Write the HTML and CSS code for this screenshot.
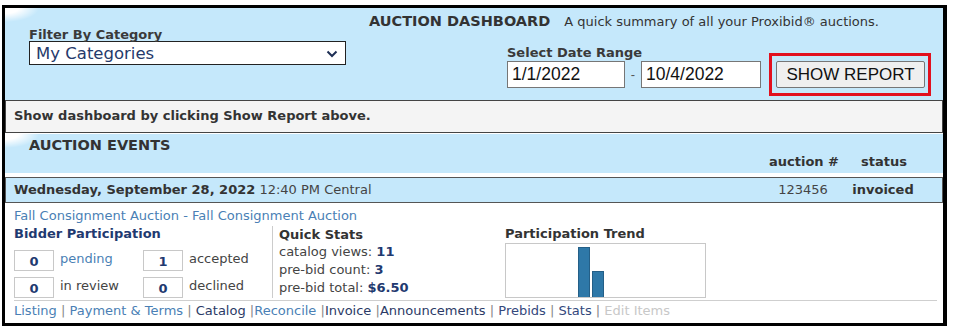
FILE: index.html
```html
<!DOCTYPE html>
<html>
<head>
<meta charset="utf-8">
<link rel="stylesheet" href="styles.css">
</head>
<body>
<div class="frame">
  <div class="header">
    <div class="filter">
      <div class="label">Filter By Category</div>
      <div class="select">
        <span>My Categories</span>
        <svg class="chev" width="12" height="8" viewBox="0 0 12 8"><path d="M1.5 1.5 L6 6 L10.5 1.5" fill="none" stroke="#1e2f55" stroke-width="2"/></svg>
      </div>
    </div>
    <div class="right">
      <div class="titlerow"><span class="title">AUCTION DASHBOARD</span><span class="subtitle">A quick summary of all your Proxibid® auctions.</span></div>
      <div class="daterange">
        <div class="datecol">
          <div class="label">Select Date Range</div>
          <div class="inputs">
            <div class="date">1/1/2022</div>
            <span class="dash">-</span>
            <div class="date">10/4/2022</div>
          </div>
        </div>
        <div class="highlight"><div class="btn">SHOW REPORT</div></div>
      </div>
    </div>
  </div>
  <div class="notice">Show dashboard by clicking Show Report above.</div>
  <div class="events">
    <div class="events-title">AUCTION EVENTS</div>
    <div class="cols">
      <span></span><span class="colh">auction #</span><span class="colh">status</span>
    </div>
  </div>
  <div class="eventrow cols">
    <span><b>Wednesday, September 28, 2022</b> 12:40 PM Central</span>
    <span class="num">123456</span>
    <span class="stat">invoiced</span>
  </div>
  <div class="detail">
    <div class="auction-link">Fall Consignment Auction - Fall Consignment Auction</div>
    <div class="panels">
      <div class="bidders">
        <div class="ptitle navy">Bidder Participation</div>
        <div class="boxes">
          <div class="box">0</div><div class="blabel light">pending</div>
          <div class="box">1</div><div class="blabel">accepted</div>
          <div class="box">0</div><div class="blabel">in review</div>
          <div class="box">0</div><div class="blabel">declined</div>
        </div>
      </div>
      <div class="stats">
        <div class="ptitle">Quick Stats</div>
        <div class="sline">catalog views: <b>11</b></div>
        <div class="sline">pre-bid count: <b>3</b></div>
        <div class="sline">pre-bid total: <b>$6.50</b></div>
      </div>
      <div class="trend">
        <div class="ptitle">Participation Trend</div>
        <div class="chart">
          <div class="bar" style="height:50px"></div>
          <div class="bar" style="height:26px"></div>
        </div>
      </div>
    </div>
    <div class="links"><span class="lk">Listing</span><span class="sep"> | </span><span class="lk">Payment &amp; Terms</span><span class="sep"> | </span><span class="dk">Catalog</span><span class="sep"> |</span><span class="lk">Reconcile</span><span class="sep"> |</span><span class="dk">Invoice</span><span class="sep"> |</span><span class="dk">Announcements</span><span class="sep"> | </span><span class="dk2">Prebids</span><span class="sep"> | </span><span class="dk2">Stats</span><span class="sep"> | </span><span class="dis">Edit Items</span></div>
  </div>
</div>
</body>
</html>
```

FILE: styles.css
```css
* { box-sizing: border-box; }
body {
  margin: 0;
  background: #fff;
  font-family: "DejaVu Sans", Verdana, sans-serif;
  font-size: 13px;
  color: #333;
}
.frame {
  margin: 5px 0 0 2px;
  width: 945px;
  height: 321px;
  border: 3px solid #000;
  border-right-width: 4px;
  background: #fff;
  overflow: hidden;
  display: flex;
  flex-direction: column;
}
.frame > * { flex-shrink: 0; }
.header {
  height: 92px;
  background: radial-gradient(ellipse 34px 14px at 0 0, #fff 0, #fff 40%, rgba(255,255,255,0) 100%), #c5e8fb;
  display: flex;
}
.label {
  font-weight: bold;
  line-height: 16px;
  color: #3a3a3a;
}
.filter {
  padding: 19px 0 0 24px;
  width: 364px;
}
.select {
  margin-top: -2px;
  width: 317px;
  height: 24px;
  border: 1px solid #222;
  background: #fff;
  display: flex;
  align-items: center;
  justify-content: space-between;
  padding: 0 7px 0 6px;
  font-size: 16.5px;
  color: #253a6b;
}
.chev { margin-top: 1px; }
.right {
  padding-top: 5px;
}
.titlerow {
  line-height: 16px;
  white-space: nowrap;
}
.title { font-weight: bold; color: #333; font-size: 14.5px; }
.subtitle { margin-left: 14px; font-size: 13px; color: #333; }
.daterange {
  margin: 15px 0 0 138px;
  display: flex;
  align-items: flex-start;
}
.inputs { display: flex; align-items: center; }
.date {
  height: 27px;
  width: 118px;
  border: 1px solid #767676;
  background: #fff;
  font-family: "Liberation Sans", Arial, sans-serif;
  font-size: 17.5px;
  color: #111;
  line-height: 25px;
  padding-left: 4px;
}
.date + .dash + .date { width: 120px; }
.dash { width: 16px; text-align: center; color: #555; font-family: "Liberation Sans", Arial, sans-serif; }
.highlight {
  margin: 8px 0 0 8px;
  border: 3px solid #e2101e;
  padding: 5px 3px 5px 4px;
}
.btn {
  width: 149px;
  height: 27px;
  background: #efefef;
  border: 1px solid #767676;
  border-radius: 2px;
  font-family: "Liberation Sans", Arial, sans-serif;
  font-size: 17px;
  color: #111;
  line-height: 25px;
  text-align: center;
}
.notice {
  height: 33px;
  border: 1px solid #444;
  background: #f4f4f4;
  font-weight: bold;
  line-height: 30px;
  padding-left: 8px;
  color: #333;
}
.events {
  margin-top: 1px;
  height: 39px;
  background: radial-gradient(ellipse 34px 14px at 0 0, #fff 0, #fff 40%, rgba(255,255,255,0) 100%), #c5e8fb;
  padding: 3px 0 0 0;
}
.events-title {
  font-weight: bold;
  font-size: 14.5px;
  line-height: 16px;
  padding-left: 24px;
  color: #333;
}
.cols {
  display: grid;
  grid-template-columns: 1fr 96px 64px;
  padding-right: 27px;
}
.events .cols { line-height: 16px; margin-top: 1px; }
.colh { font-weight: bold; text-align: center; color: #333; }
.eventrow {
  margin-top: 4px;
  height: 26px;
  border: 1px solid #555;
  background: #c5e8fb;
  line-height: 24px;
  padding-left: 8px;
  color: #444;
}
.eventrow b { color: #333; }
.num { text-align: center; color: #444; }
.stat { text-align: center; font-weight: bold; color: #333; }
.detail {
  padding: 5px 0 0 9px;
}
.auction-link {
  line-height: 16px;
  color: #4a7fb5;
}
.panels {
  display: flex;
  margin-top: 2px;
}
.ptitle {
  font-weight: bold;
  line-height: 16px;
  color: #333;
}
.navy { color: #1f3a70; }
.bidders { width: 258px; }
.boxes {
  margin-top: 8px;
  display: grid;
  grid-template-columns: 40px 89px 40px auto;
  row-gap: 6px;
}
.box {
  height: 21px;
  border: 1px solid #c8c8c8;
  text-align: center;
  font-weight: bold;
  color: #1f3a70;
  line-height: 21px;
}
.blabel {
  padding-left: 6px;
  line-height: 17px;
  color: #444;
}
.blabel.light { color: #4a7fb5; }
.stats {
  width: 233px;
  border-left: 1px solid #ccc;
  padding-left: 6px;
  height: 72px;
  color: #444;
}
.sline { line-height: 18px; }
.stats .ptitle { line-height: 17px; }
.sline b { color: #1f3a70; }
.chart {
  margin-top: 1px;
  width: 201px;
  height: 55px;
  border: 1px solid #c8c8c8;
  display: flex;
  align-items: flex-end;
  padding-left: 72px;
  gap: 2px;
}
.bar {
  width: 12px;
  background: #2e78a8;
  border: 1px solid #245f87;
  border-bottom: none;
}
.links {
  margin: 2px 6px 0 0;
  border-top: 1px solid #cfcfcf;
  line-height: 18px;
  padding-top: 1px;
}
.sep { white-space: pre; color: #888; }
.lk { color: #4a7fb5; }
.dk { color: #2b3a66; }
.dk2 { color: #34487c; }
.dis { color: #c8c8c8; }
```
